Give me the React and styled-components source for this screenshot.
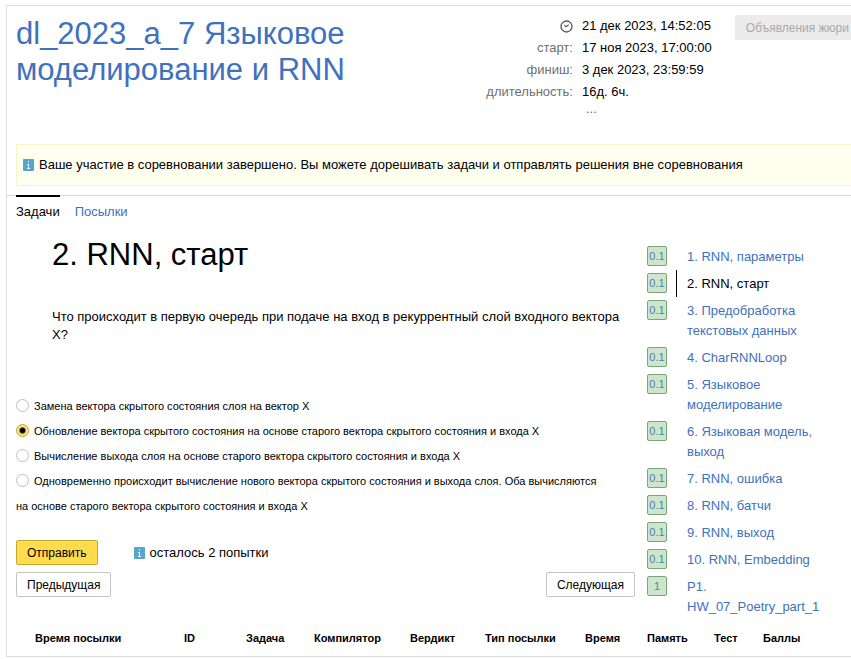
import React, { useState } from "react";
import styled, { createGlobalStyle } from "styled-components";

const GlobalStyle = createGlobalStyle`
  *, *::before, *::after { box-sizing: border-box; }
  body {
    margin: 0;
    background: #fff;
    color: #000;
    font: 13px/18px "Liberation Sans", Arial, sans-serif;
  }
  a { color: #4071be; text-decoration: none; }
  h1, h2, p, dl, dd, dt, ul { margin: 0; padding: 0; font-weight: normal; }
`;

const Page = styled.div`
  margin: 5px 0 0 6px;
  border: 1px solid #ddd;
  border-right: 0;
  border-bottom: 0;
  overflow: hidden;
`;

const Header = styled.header`
  display: flex;
  align-items: flex-start;
  min-height: 138px;
  padding: 9px 0 0 9px;
`;

const Title = styled.h1`
  flex: 1;
  padding: 1px 90px 0 0;
  font-size: 31px;
  line-height: 36px;
`;

const Info = styled.dl`
  display: grid;
  grid-template-columns: auto auto;
  grid-auto-rows: 22px;
  column-gap: 9px;
  line-height: 22px;
  font-size: 13px;
  margin-right: 23px;
`;

const InfoLabel = styled.dt`
  display: flex;
  align-items: center;
  justify-content: flex-end;
  color: #707070;
`;

const InfoMore = styled.dd`
  grid-column: 2;
  padding-left: 4px;
  line-height: 12px;
`;

const Button = styled.button`
  height: 25px;
  padding: 0 10px;
  border: 1px solid ${(p) => (p.$primary ? "#c7a82e" : "#c4c4c4")};
  border-radius: 2px;
  background: ${(p) => (p.$primary ? "#ffdb4d" : "#fff")};
  color: #000;
  font: 12px "Liberation Sans", Arial, sans-serif;
`;

const JuryButton = styled(Button)`
  flex: none;
  border-color: #ebebeb;
  background: #ebebeb;
  color: #aaa;
  margin-right: -9px;
`;

const Notice = styled.div`
  display: flex;
  align-items: center;
  gap: 5px;
  height: 42px;
  margin-left: 9px;
  padding: 0 6px;
  border: 1px solid #f8f3c8;
  border-right: 0;
  background: #fffff0;
`;

const Tabs = styled.nav`
  display: flex;
  gap: 15px;
  margin-top: 9px;
  padding-left: 9px;
  border-top: 1px solid #d9d9d9;
  line-height: 30px;
`;

const Tab = styled.a`
  margin-top: -1px;
  border-top: 2px solid ${(p) => (p.$active ? "#000" : "transparent")};
  color: ${(p) => (p.$active ? "#000" : "#4071be")};
  font-size: 13px;
`;

const Columns = styled.div`
  display: grid;
  grid-template-columns: minmax(0, 1fr) 204px;
  column-gap: 12px;
  padding-left: 9px;
`;

const Problem = styled.article`
  padding: 9px 8px 0 36px;
`;

const ProblemTitle = styled.h2`
  margin-bottom: 34px;
  font-size: 31px;
  line-height: 38px;
`;

const Options = styled.form`
  margin-top: 50px;
`;

const Option = styled.label`
  display: block;
  padding-right: 24px;
  font-size: 11px;
  line-height: 25px;
`;

const Radio = styled.input`
  appearance: none;
  width: 13px;
  height: 13px;
  margin: 0 5px 0 0;
  border: 1px solid #bfbfbf;
  border-radius: 50%;
  background: #fff;
  vertical-align: -2px;
  &:checked {
    border-color: #c2a32a;
    background: radial-gradient(circle, #000 2px, #ffe680 4px);
  }
`;

const SubmitRow = styled.div`
  display: flex;
  align-items: center;
  gap: 36px;
  margin: 21px 0 7px;
`;

const Attempts = styled.span`
  display: flex;
  align-items: center;
  gap: 5px;
`;

const Pager = styled.div`
  display: flex;
  justify-content: space-between;
`;

const TaskList = styled.ul`
  list-style: none;
  padding-top: 16px;
`;

const Task = styled.li`
  display: grid;
  grid-template-columns: 20px minmax(0, 1fr);
  column-gap: 9px;
`;

const Score = styled.a`
  height: 20px;
  margin-top: 3px;
  border: 1px solid #77a877;
  border-radius: 2px;
  background: #cce5cc;
  color: #5080b0;
  font-size: 11px;
  line-height: 18px;
  text-align: center;
`;

const TaskLink = styled.a`
  padding: 4px 16px 3px 10px;
  border-left: 1px solid ${(p) => (p.$active ? "#000" : "transparent")};
  color: ${(p) => (p.$active ? "#000" : "#4071be")};
  font-size: 13px;
  line-height: 20px;
`;

const Runs = styled.table`
  width: 100%;
  table-layout: fixed;
  border-collapse: collapse;
  border-bottom: 1px solid #d9d9d9;
`;

const RunsHead = styled.th`
  width: ${(p) => (p.$width ? p.$width + "px" : "auto")};
  height: 36px;
  padding: 0;
  font-size: 11px;
  text-align: left;
  white-space: nowrap;
  &:first-child { padding-left: 28px; }
`;

function InfoIcon() {
  return (
    <svg width="11" height="12" viewBox="0 0 11 12" aria-hidden="true">
      <rect width="11" height="12" rx="1" fill="#55a5cf" />
      <path d="M5 2h1v1.5H5zM4 5h2v4h1v1H4V9h1V6H4z" fill="#fff" fillOpacity="0.9" />
    </svg>
  );
}

function ClockIcon() {
  return (
    <svg width="13" height="13" viewBox="0 0 13 13" fill="none" stroke="#555" aria-hidden="true">
      <circle cx="6.5" cy="6.5" r="5.5" strokeWidth="1.3" />
      <path d="M4.3 5.2 6 6.8 8.8 4.7" strokeWidth="1.1" />
    </svg>
  );
}

const dates = [
  ["старт:", "17 ноя 2023, 17:00:00"],
  ["финиш:", "3 дек 2023, 23:59:59"],
  ["длительность:", "16д. 6ч."],
];

const options = [
  "Замена вектора скрытого состояния слоя на вектор X",
  "Обновление вектора скрытого состояния на основе старого вектора скрытого состояния и входа X",
  "Вычисление выхода слоя на основе старого вектора скрытого состояния и входа X",
  "Одновременно происходит вычисление нового вектора скрытого состояния и выхода слоя. Оба вычисляются на основе старого вектора скрытого состояния и входа X",
];

const tasks = [
  ["0.1", "1. RNN, параметры"],
  ["0.1", "2. RNN, старт"],
  ["0.1", "3. Предобработка текстовых данных"],
  ["0.1", "4. CharRNNLoop"],
  ["0.1", "5. Языковое моделирование"],
  ["0.1", "6. Языковая модель, выход"],
  ["0.1", "7. RNN, ошибка"],
  ["0.1", "8. RNN, батчи"],
  ["0.1", "9. RNN, выход"],
  ["0.1", "10. RNN, Embedding"],
  ["1", "P1. HW_07_Poetry_part_1"],
];

const columns = [
  ["Время посылки", 177],
  ["ID", 62],
  ["Задача", 68],
  ["Компилятор", 96],
  ["Вердикт", 75],
  ["Тип посылки", 100],
  ["Время", 62],
  ["Память", 67],
  ["Тест", 49],
  ["Баллы", 0],
];

export default function App() {
  const [answer, setAnswer] = useState(1);
  return (
    <>
      <GlobalStyle />
      <Page>
        <Header>
          <Title><a href="#contest">dl_2023_a_7 Языковое моделирование и RNN</a></Title>
          <Info>
            <InfoLabel><ClockIcon /></InfoLabel>
            <dd>21 дек 2023, 14:52:05</dd>
            {dates.map(([label, value]) => (
              <React.Fragment key={label}>
                <InfoLabel>{label}</InfoLabel>
                <dd>{value}</dd>
              </React.Fragment>
            ))}
            <InfoMore><a href="#more">...</a></InfoMore>
          </Info>
          <JuryButton type="button" disabled>Объявления жюри</JuryButton>
        </Header>
        <Notice>
          <InfoIcon />
          <p>Ваше участие в соревновании завершено. Вы можете дорешивать задачи и отправлять решения вне соревнования</p>
        </Notice>
        <Tabs>
          <Tab href="#problems" $active>Задачи</Tab>
          <Tab href="#submits">Посылки</Tab>
        </Tabs>
        <Columns>
          <main>
            <Problem>
              <ProblemTitle>2. RNN, старт</ProblemTitle>
              <p>Что происходит в первую очередь при подаче на вход в рекуррентный слой входного вектора X?</p>
            </Problem>
            <Options onSubmit={(e) => e.preventDefault()}>
              {options.map((text, i) => (
                <Option key={text}>
                  <Radio type="radio" name="answer" checked={answer === i} onChange={() => setAnswer(i)} />
                  {text}
                </Option>
              ))}
              <SubmitRow>
                <Button type="submit" $primary>Отправить</Button>
                <Attempts><InfoIcon />осталось 2 попытки</Attempts>
              </SubmitRow>
              <Pager>
                <Button type="button">Предыдущая</Button>
                <Button type="button">Следующая</Button>
              </Pager>
            </Options>
          </main>
          <TaskList>
            {tasks.map(([score, name], i) => (
              <Task key={name}>
                <Score href={"#score-" + (i + 1)}>{score}</Score>
                <TaskLink href={"#task-" + (i + 1)} $active={i === 1}>{name}</TaskLink>
              </Task>
            ))}
          </TaskList>
        </Columns>
        <Runs>
          <thead>
            <tr>
              {columns.map(([name, width]) => (
                <RunsHead key={name} scope="col" $width={width}>{name}</RunsHead>
              ))}
            </tr>
          </thead>
        </Runs>
      </Page>
    </>
  );
}
